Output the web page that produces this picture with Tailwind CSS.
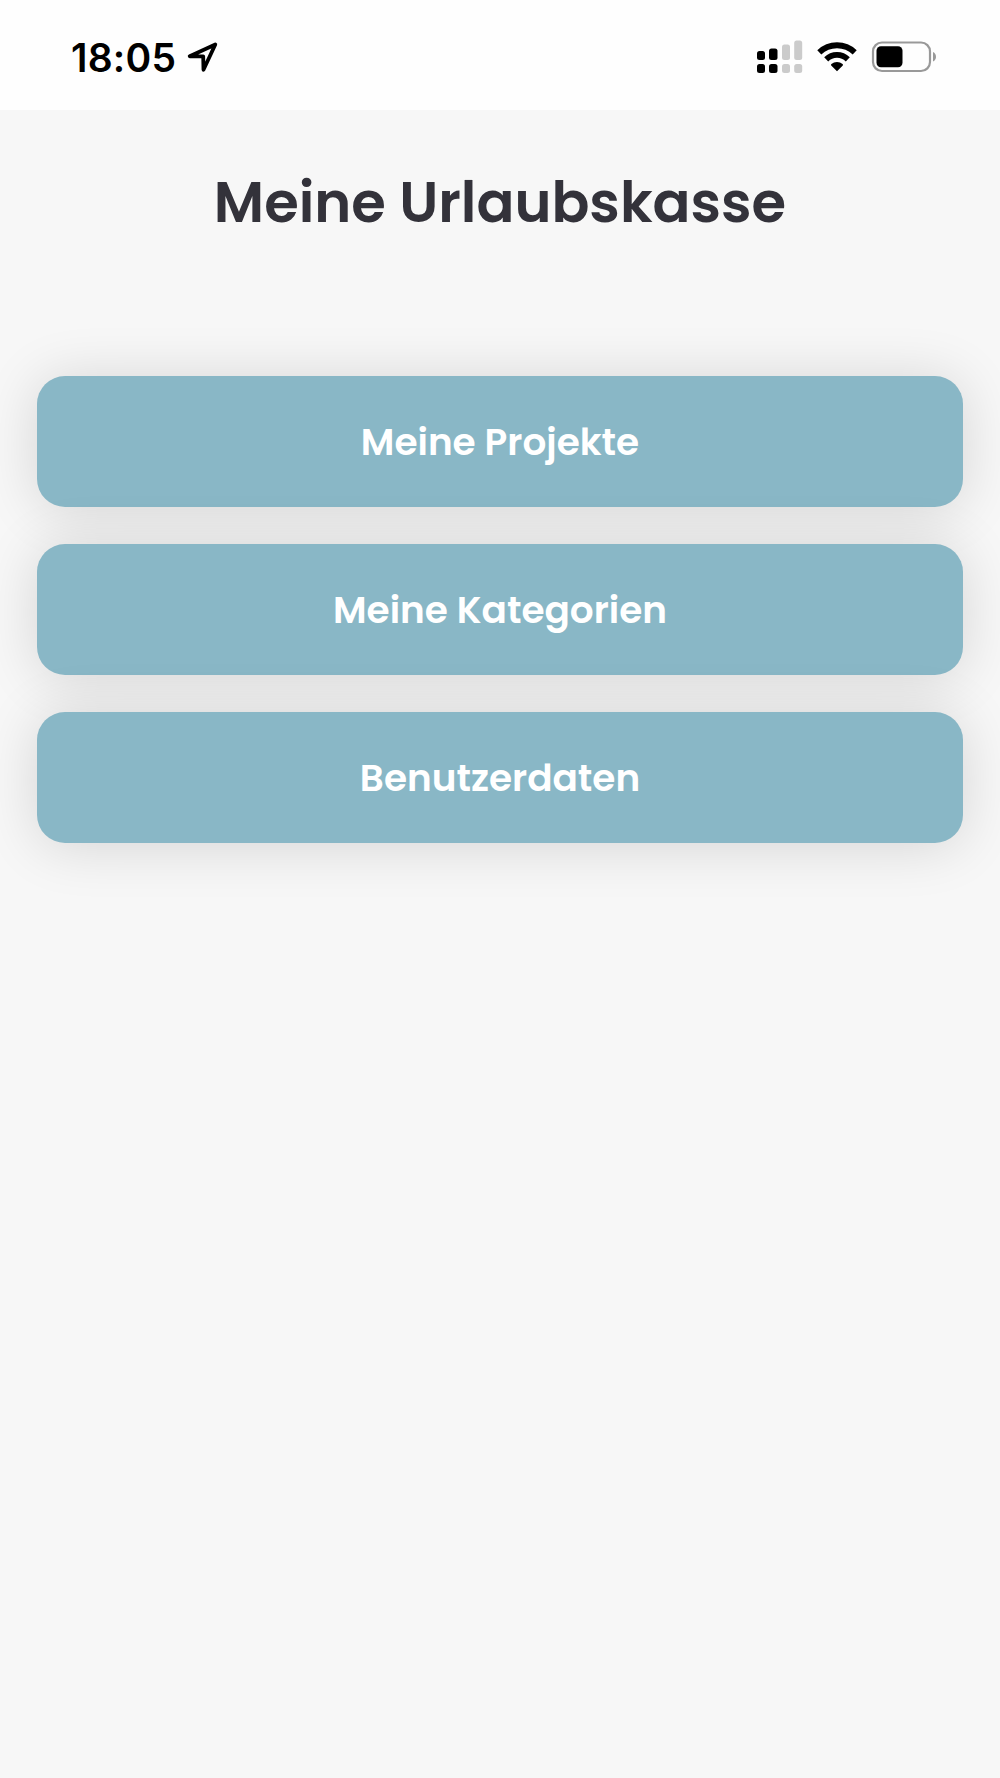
<!DOCTYPE html>
<html lang="de">
  <head>
    <meta charset="UTF-8" />
    <meta name="viewport" content="width=device-width, initial-scale=1.0" />
    <title>Meine Urlaubskasse</title>
    <script src="https://cdn.jsdelivr.net/npm/@tailwindcss/browser@4"></script>
  </head>
  <body class="min-h-screen bg-[#f7f7f7] font-[Poppins,Inter,sans-serif] font-semibold">
    <!-- Status bar -->
    <header class="flex h-[110px] items-start justify-between bg-[#fefefe] pl-[71px] pr-[63px] pt-[36px] text-black">
      <div class="flex h-[42px] items-center">
        <span class="w-[116px] whitespace-nowrap font-[Inter,sans-serif] text-[39px] leading-none tracking-[0.2px]">18:05</span>
        <svg class="h-[32px] w-[32px]" viewBox="0 0 32 32" fill="none" stroke="currentColor" stroke-width="3.8" stroke-linejoin="round">
          <path d="M28.3 3.5 2.700 15.300h13.500l.3 13.500Z" />
        </svg>
      </div>
      <div class="flex h-[42px] items-center">
        <svg class="h-[34px] w-[47px]" viewBox="0 0 47 34">
          <g fill="#000">
            <rect x="1" y="11" width="8" height="9" rx="2.5" />
            <rect x="13" y="8.5" width="8.5" height="11.5" rx="2.5" />
            <rect x="1" y="24" width="8" height="9" rx="2.5" />
            <rect x="13" y="24" width="8.5" height="9" rx="2.5" />
          </g>
          <g fill="#cbcbcb">
            <rect x="26" y="4.5" width="8" height="15.5" rx="2.5" />
            <rect x="38.2" y="0.5" width="8" height="19.5" rx="2.5" />
            <rect x="26" y="24" width="8" height="9" rx="2.5" />
            <rect x="38.2" y="24" width="8" height="9" rx="2.5" />
          </g>
        </svg>
        <svg class="ml-[14px] h-[30px] w-[40px]" viewBox="0 0 40 30">
          <g fill="none" stroke="#000" stroke-width="5.8">
            <path d="M2.3 10.4a25.5 25.5 0 0 1 35.4 0" />
            <path d="M9.2 17.3a15.6 15.6 0 0 1 21.6 0" />
          </g>
          <path d="M20 29.2 14.2 23.5q-.5-.8.2-1.4a8.6 8.6 0 0 1 11.2 0q.7.6.2 1.4Z" />
        </svg>
        <svg class="ml-[14px] h-[32px] w-[66px]" viewBox="0 0 66 32">
          <rect x="2" y="1.5" width="57" height="28.5" rx="9" fill="none" stroke="#999" stroke-width="2.2" />
          <rect x="5.5" y="5.3" width="26" height="21" rx="4.5" />
          <path d="M62 11q3 1.5 3 4.8t-3 4.8Z" fill="#999" />
        </svg>
      </div>
    </header>

    <main class="px-[37px] pt-[57px]">
      <h1 class="text-center text-[56px] leading-[72px] text-[#33323a]">Meine Urlaubskasse</h1>

      <!-- Menu -->
      <nav class="mt-[137px] flex flex-col gap-[37px] text-[37.4px] text-white">
        <button class="relative h-[131px] rounded-[28px] bg-[#89b7c6] pt-px shadow-[0_3px_56px_rgba(0,0,0,0.14)]">Meine Projekte</button>
        <button class="relative h-[131px] rounded-[28px] bg-[#89b7c6] pt-px shadow-[0_3px_56px_rgba(0,0,0,0.14)]">Meine Kategorien</button>
        <button class="relative h-[131px] rounded-[28px] bg-[#89b7c6] pt-px shadow-[0_3px_56px_rgba(0,0,0,0.14)]">Benutzerdaten</button>
      </nav>
    </main>
  </body>
</html>
